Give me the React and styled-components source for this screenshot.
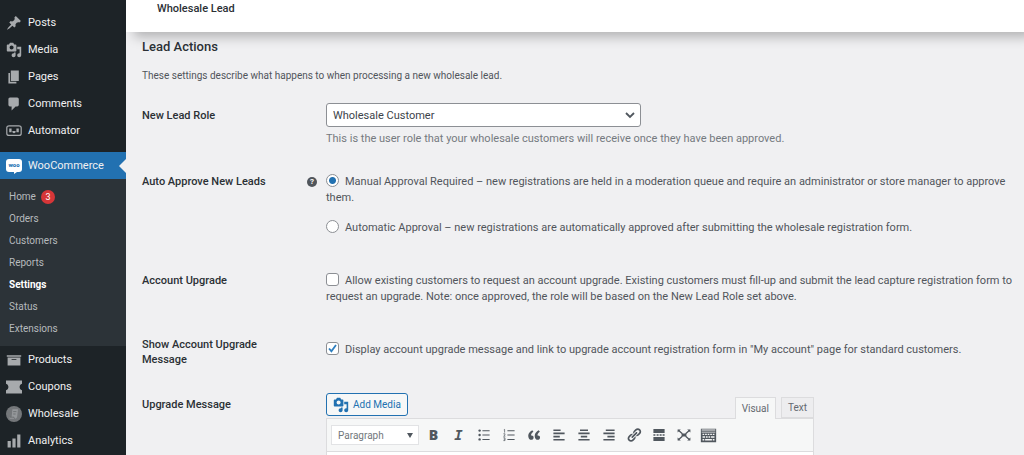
import { useState } from 'react';
import styled, { createGlobalStyle, css } from 'styled-components';

const GlobalStyle = createGlobalStyle`
  * {
    box-sizing: border-box;
  }

  body {
    margin: 0;
    background: #f0f0f2;
    color: #50555b;
    font-family: Roboto, 'Open Sans', sans-serif;
    font-size: 11px;
    line-height: 16px;
  }

  button,
  select,
  input {
    font: inherit;
    color: inherit;
  }
`;

const StyledLayout = styled.div`
  display: flex;
  height: 100vh;
  overflow: hidden;
`;

const StyledSidebar = styled.nav`
  flex: 0 0 126px;
  padding-top: 9px;
  background: #1d2327;
  overflow: hidden;

  ul {
    list-style: none;
    margin: 0;
    padding: 0;
  }
`;

const StyledMenuLink = styled.a`
  position: relative;
  display: flex;
  align-items: center;
  gap: 6px;
  height: 27px;
  padding-left: 6px;
  color: #f0f0f1;
  text-decoration: none;

  svg {
    flex: none;
    fill: #a7aaad;
  }

  ${({ $active }) =>
    $active &&
    css`
      margin-top: 8px;
      background: #2271b1;

      &::after {
        content: '';
        position: absolute;
        right: 0;
        border: 7px solid transparent;
        border-right-color: #f0f0f2;
        border-left-width: 0;
      }
    `}
`;

const StyledIconSlot = styled.span`
  display: flex;
  flex: 0 0 16px;
  justify-content: center;
`;

const StyledSubmenu = styled.ul`
  && {
    padding: 7px 0 6px;
    background: #2c3338;
  }
`;

const StyledSubLink = styled.a`
  display: flex;
  align-items: center;
  gap: 5px;
  height: 22px;
  padding-left: 9px;
  color: ${({ $current }) => ($current ? '#fff' : '#b6babd')};
  font-size: 10px;
  font-weight: ${({ $current }) => ($current ? 700 : 400)};
  text-decoration: none;
`;

const StyledBadge = styled.span`
  width: 14px;
  height: 14px;
  border-radius: 50%;
  background: #d63638;
  color: #fff;
  font-size: 9px;
  line-height: 14px;
  text-align: center;
`;

const StyledWoo = styled.span`
  position: relative;
  width: 16px;
  height: 13px;
  border-radius: 3px;
  background: #fff;
  color: #2271b1;
  font-size: 6px;
  font-weight: 800;
  line-height: 12px;
  text-align: center;

  &::after {
    content: '';
    position: absolute;
    top: 13px;
    left: 8px;
    border: solid transparent;
    border-width: 0 0 2px 3px;
    border-left-color: #fff;
  }
`;

const StyledMain = styled.main`
  flex: 1;
  min-width: 0;
`;

const StyledHeader = styled.header`
  height: 32px;
  padding: 1px 31px 0;
  background: #fff;
  box-shadow: 8px 5px 12px rgba(0, 0, 0, 0.26);
  color: #2b3035;
  font-weight: 500;
`;

const StyledForm = styled.form`
  padding: 5px 12px 0 16px;
`;

const StyledTitle = styled.h2`
  margin: 0 0 11px;
  color: #2b3035;
  font-size: 13px;
  font-weight: 500;
  line-height: 20px;
`;

const StyledIntro = styled.p`
  margin: 0 0 19px;
  font-size: 10px;
`;

const StyledRow = styled.div`
  display: grid;
  grid-template-columns: 154px 20px minmax(0, 1fr);
  gap: 0 5px;
  margin-bottom: 26px;
`;

const StyledLabel = styled.label`
  padding: ${({ $top }) => $top || 0}px 20px 0 0;
  color: #2b3035;
  font-weight: 500;
  line-height: 15px;
`;

const StyledHelp = styled.button`
  width: 10px;
  height: 10px;
  margin: 3px 0 0 6px;
  padding: 0;
  border: 0;
  border-radius: 50%;
  background: #50555b;
  color: #fff;
  font-size: 8px;
  font-weight: 700;
  line-height: 10px;
`;

const StyledField = styled.div`
  grid-column: 3;
  min-width: 0;
`;

const StyledSelectWrap = styled.div`
  position: relative;
  max-width: 315px;

  svg {
    position: absolute;
    top: 8px;
    right: 6px;
    pointer-events: none;
  }
`;

const StyledSelect = styled.select`
  display: block;
  width: 100%;
  height: 24px;
  padding: 1px 24px 0 6px;
  border: 1px solid #8c8f94;
  border-radius: 3px;
  background: #fff;
  color: #3c434a;
  appearance: none;
`;

const StyledDescription = styled.p`
  margin: 4px 0 1px;
  color: #757a80;
`;

const StyledOptions = styled.div`
  display: grid;
  gap: 14px;
  padding-bottom: 6px;
`;

const StyledCheckField = styled(StyledField)`
  padding: 5px 0 6px;
`;

const StyledInput = styled.input`
  width: 13px;
  height: 13px;
  margin: 0 6px 0 0;
  border: 1px solid #8c8f94;
  border-radius: ${({ type }) => (type === 'radio' ? '50%' : '3px')};
  background: #fff;
  appearance: none;
  vertical-align: -2px;

  &[type='radio']:checked {
    background: radial-gradient(circle, #2271b1 3px, #fff 4px);
  }

  &[type='checkbox']:checked {
    background: #fff
      url("data:image/svg+xml,%3Csvg xmlns='http://www.w3.org/2000/svg' viewBox='0 0 11 11'%3E%3Cpath d='M2 5.5l2.4 2.7L9 2' fill='none' stroke='%232f7fc0' stroke-width='1.8'/%3E%3C/svg%3E")
      center / 11px no-repeat;
  }
`;

const StyledEditor = styled.div`
  max-width: 488px;
`;

const StyledEditorTop = styled.div`
  display: flex;
  justify-content: space-between;
  align-items: flex-start;
  height: 25px;
`;

const StyledMediaButton = styled.button`
  display: flex;
  align-items: center;
  gap: 4px;
  height: 23px;
  padding: 0 6px;
  border: 1px solid #2271b1;
  border-radius: 3px;
  background: #f6f7f7;
  color: #2271b1;
  font-size: 10px;

  svg {
    fill: #2271b1;
  }
`;

const StyledTabs = styled.div`
  display: flex;
  gap: 5px;
  padding-top: 4px;
`;

const StyledTab = styled.button`
  position: relative;
  height: ${({ $active }) => ($active ? 22 : 21)}px;
  padding: 0 6px;
  border: 1px solid #dcdcde;
  border-bottom-width: ${({ $active }) => ($active ? 0 : 1)}px;
  background: ${({ $active }) => ($active ? '#f6f7f7' : '#ededef')};
  color: #646970;
  font-size: 10px;
`;

const StyledToolbar = styled.div`
  display: flex;
  align-items: center;
  height: 34px;
  padding: 0 4px;
  border: 1px solid #dcdcde;
  background: #f6f7f7;
`;

const StyledFormat = styled(StyledSelectWrap)`
  width: 88px;
  margin-right: 2px;

  select {
    height: 20px;
    border-color: #e2e3e5;
    border-radius: 0;
    color: #72777c;
    font-size: 10px;
  }
`;

const StyledTool = styled.button`
  display: flex;
  align-items: center;
  justify-content: center;
  flex: 0 0 25px;
  height: 24px;
  padding: 0;
  border: 0;
  background: none;
  color: #50575e;

  svg {
    fill: currentColor;
  }
`;

const StyledBold = styled.b`
  font-family: 'Open Sans', sans-serif;
  font-size: 14px;
  font-weight: 800;
`;

const StyledItalic = styled.i`
  font-family: 'DejaVu Sans Mono', monospace;
  font-size: 14px;
  font-weight: 700;
`;

const StyledContent = styled.div`
  height: 120px;
  border: 1px solid #dcdcde;
  border-top: 0;
  background: #fff;
`;

const Icon = ({ size = 16, children }) => (
  <svg width={size} height={size} viewBox="0 0 20 20" aria-hidden="true">
    {children}
  </svg>
);

const MediaIcon = () => (
  <Icon>
    <path d="M13 11V4c0-.55-.45-1-1-1h-1.67L9 1H5L3.67 3H2c-.55 0-1 .45-1 1v7c0 .55.45 1 1 1h10c.55 0 1-.45 1-1zM7 4.5c1.38 0 2.5 1.12 2.5 2.5S8.38 9.5 7 9.5 4.5 8.38 4.5 7 5.62 4.5 7 4.5zM14 6h5v10.5c0 1.38-1.12 2.5-2.5 2.5S14 17.88 14 16.5s1.12-2.5 2.5-2.5c.17 0 .34.02.5.05V9h-3V6zm-4 8.05V13h2v3.5c0 1.38-1.12 2.5-2.5 2.5S7 17.88 7 16.5 8.12 14 9.5 14c.17 0 .34.02.5.05z" />
  </Icon>
);

const topItems = [
  {
    name: 'Posts',
    icon: (
      <Icon>
        <path d="M10.44 3.02l1.82-1.82 6.36 6.35-1.83 1.82c-1.05-.68-2.48-.57-3.41.36l-.75.75c-.92.93-1.04 2.35-.35 3.41l-1.83 1.82-2.41-2.41-2.8 2.79c-.42.42-3.38 2.71-3.8 2.29s1.86-3.39 2.28-3.81l2.79-2.79L4.1 9.36l1.83-1.82c1.05.69 2.48.57 3.4-.36l.75-.75c.93-.92 1.05-2.35.36-3.41z" />
      </Icon>
    ),
  },
  { name: 'Media', icon: <MediaIcon /> },
  {
    name: 'Pages',
    icon: (
      <Icon>
        <path d="M6 15V2h10v13H6zm-1 1h8v2H3V5h2v11z" />
      </Icon>
    ),
  },
  {
    name: 'Comments',
    icon: (
      <Icon>
        <path d="M5 2h9c1.1 0 2 .9 2 2v7c0 1.1-.9 2-2 2h-2l-5 5v-5H5c-1.1 0-2-.9-2-2V4c0-1.1.9-2 2-2z" />
      </Icon>
    ),
  },
  {
    name: 'Automator',
    icon: (
      <Icon>
        <path
          d="M4 3.500h12c1.700 0 3 1 3 2.500v7c0 1.500-1.300 2.500-3 2.500H4c-1.700 0-3-1-3-2.500V6c0-1.500 1.300-2.500 3-2.500z"
          fill="none"
          stroke="#a7aaad"
          strokeWidth="1.500"
        />
        <path d="M4 7h3v4.500H4zM13 7h3v4.500h-3zM8 10h4v1.500c-1 1.600-3 1.600-4 0z" />
      </Icon>
    ),
  },
];

const bottomItems = [
  {
    name: 'Products',
    icon: (
      <Icon>
        <path d="M19 4v2H1V4h18zM2 7h16v10H2V7zm11 3V9H7v1h6z" />
      </Icon>
    ),
  },
  {
    name: 'Coupons',
    icon: (
      <Icon>
        <path d="M0 2h20v4c-2 .8-3 2.200-3 4s1 3.200 3 4v4H0v-4c2-.8 3-2.200 3-4s-1-3.200-3-4z" />
      </Icon>
    ),
  },
  {
    name: 'Wholesale',
    icon: (
      <Icon>
        <circle cx="10" cy="10" r="10" fill="#74777a" />
        <path
          d="M8 4h7l-1 9c-.3 2-1.500 3-3.500 3H5c-1 0-1-2 0-2h2z"
          fill="#94979a"
        />
        <path
          d="M9 7h4M9 10h3M5 14h5c0 1 .5 2 1.500 2"
          fill="none"
          stroke="#66696c"
        />
      </Icon>
    ),
  },
  {
    name: 'Analytics',
    icon: (
      <Icon>
        <path d="M18 18V2h-4v16h4zm-6 0V7H8v11h4zm-6 0v-8H2v8h4z" />
      </Icon>
    ),
  },
];

const subItems = [
  { name: 'Home', count: 3 },
  { name: 'Orders' },
  { name: 'Customers' },
  { name: 'Reports' },
  { name: 'Settings', current: true },
  { name: 'Status' },
  { name: 'Extensions' },
];

const tools = [
  { name: 'Bold', icon: <StyledBold>B</StyledBold> },
  { name: 'Italic', icon: <StyledItalic>I</StyledItalic> },
  {
    name: 'Bulleted list',
    icon: (
      <Icon>
        <circle cx="4.500" cy="4.500" r="1.500" />
        <circle cx="4.500" cy="10" r="1.500" />
        <circle cx="4.500" cy="15.500" r="1.500" />
        <path d="M8 4h9v1.200H8zM8 9.400h9v1.200H8zM8 15h9v1.200H8z" />
      </Icon>
    ),
  },
  {
    name: 'Numbered list',
    icon: (
      <Icon>
        <path d="M8 4h9v1.200H8zM8 9.400h9v1.200H8zM8 15h9v1.200H8z" />
        <path
          d="M3.500 3.500l1-.5v4M3 8.500h2v1.300L3.300 11.500H5.500M3 13.500h2v3.500H3M3.500 15.200H5"
          fill="none"
          stroke="currentColor"
          strokeWidth=".9"
        />
      </Icon>
    ),
  },
  {
    name: 'Blockquote',
    icon: (
      <Icon>
        <path d="M9.490 13.220c0-.74-.2-1.380-.61-1.900-.62-.78-1.830-.88-2.530-.72-.29-1.650 1.110-3.750 2.920-4.650L7.880 4c-2.730 1.300-5.420 4.280-4.960 8.050C3.210 14.430 4.590 16 6.540 16c.85 0 1.560-.25 2.120-.75s.83-1.180.83-2.030zm8.050 0c0-.74-.2-1.380-.61-1.900-.63-.78-1.830-.88-2.530-.72-.29-1.650 1.110-3.750 2.920-4.650L15.930 4c-2.730 1.300-5.410 4.280-4.950 8.050.29 2.380 1.660 3.950 3.610 3.950.85 0 1.560-.25 2.120-.75s.83-1.180.83-2.030z" />
      </Icon>
    ),
  },
  {
    name: 'Align left',
    icon: (
      <Icon>
        <path d="M3 3h9v2H3zM3 7h14v2H3zM3 11h8v2H3zM3 15h14v2H3z" />
      </Icon>
    ),
  },
  {
    name: 'Align center',
    icon: (
      <Icon>
        <path d="M5 3h10v2H5zM3 7h14v2H3zM6 11h8v2H6zM3 15h14v2H3z" />
      </Icon>
    ),
  },
  {
    name: 'Align right',
    icon: (
      <Icon>
        <path d="M6 3h11v2H6zM3 7h14v2H3zM8 11h9v2H8zM3 15h14v2H3z" />
      </Icon>
    ),
  },
  {
    name: 'Insert link',
    icon: (
      <Icon>
        <path d="M17.740 2.760c1.680 1.690 1.680 4.410 0 6.100l-1.530 1.520c-1.120 1.120-2.700 1.470-4.140 1.090l2.620-2.610.76-.77.76-.76c.84-.84.84-2.200 0-3.040-.84-.85-2.200-.85-3.040 0l-.77.76-3.380 3.380c-.37-1.440-.02-3.020 1.100-4.140l1.520-1.530c1.690-1.680 4.420-1.680 6.100 0zM8.590 13.430l5.340-5.340c.42-.42.42-1.100 0-1.520-.44-.43-1.130-.39-1.530 0l-5.330 5.340c-.42.42-.42 1.100 0 1.520.44.43 1.130.39 1.520 0zm-.76 2.290l4.140-4.150c.38 1.440.03 3.020-1.090 4.140l-1.520 1.530c-1.690 1.680-4.410 1.680-6.100 0-1.680-1.680-1.680-4.420 0-6.100l1.530-1.520c1.120-1.120 2.700-1.470 4.140-1.100l-4.140 4.150c-.85.84-.85 2.200 0 3.050.84.84 2.200.84 3.040 0z" />
      </Icon>
    ),
  },
  {
    name: 'Read more',
    icon: (
      <Icon>
        <path d="M3 2.500h14v5H3zM3 12.500h14v5H3zM3 9h2.500v2H3zM7 9h2.500v2H7zM10.800 9h2.500v2h-2.500zM14.500 9H17v2h-2.500z" />
      </Icon>
    ),
  },
  {
    name: 'Distraction-free mode',
    icon: (
      <Icon>
        <path d="M7 8h6v4H7zM2 3h4L2 7zM18 3h-4l4 4zM2 17h4l-4-4zM18 17h-4l4-4z" />
        <path
          d="M3 4l5 4.500M17 4l-5 4.500M3 16l5-4.500M17 16l-5-4.500"
          stroke="currentColor"
          strokeWidth="1.600"
        />
      </Icon>
    ),
  },
  {
    name: 'Toolbar toggle',
    icon: (
      <Icon size={17}>
        <path
          fillRule="evenodd"
          d="M1 2h18v16H1zM2 3v1.200h16V3zM2 5.500v1h16v-1zM3 8v1.500h2V8zM6 8v1.500h2V8zM9 8v1.500h2V8zM12 8v1.500h2V8zM15 8v1.500h2V8zM3 11v1.500h3V11zM7 11v1.500h2V11zM10 11v1.500h2V11zM13 11v1.500h4V11zM3 14v2h2v-2zM6 14v2h8v-2zM15 14v2h2v-2z"
        />
      </Icon>
    ),
  },
];

const MenuItems = ({ items }) =>
  items.map(({ name, icon }) => (
    <li key={name}>
      <StyledMenuLink href="#">
        <StyledIconSlot>{icon}</StyledIconSlot>
        {name}
      </StyledMenuLink>
    </li>
  ));

const Sidebar = () => (
  <StyledSidebar>
    <ul>
      <MenuItems items={topItems} />
      <li>
        <StyledMenuLink href="#" $active>
          <StyledWoo aria-hidden="true">woo</StyledWoo>
          WooCommerce
        </StyledMenuLink>
        <StyledSubmenu>
          {subItems.map(({ name, count, current }) => (
            <li key={name}>
              <StyledSubLink href="#" $current={current}>
                {name}
                {count && <StyledBadge>{count}</StyledBadge>}
              </StyledSubLink>
            </li>
          ))}
        </StyledSubmenu>
      </li>
      <MenuItems items={bottomItems} />
    </ul>
  </StyledSidebar>
);

const Editor = () => {
  const [tab, setTab] = useState('Visual');

  return (
    <StyledEditor>
      <StyledEditorTop>
        <StyledMediaButton type="button">
          <MediaIcon />
          Add Media
        </StyledMediaButton>
        <StyledTabs>
          {['Visual', 'Text'].map((name) => (
            <StyledTab
              key={name}
              type="button"
              $active={tab === name}
              onClick={() => setTab(name)}
            >
              {name}
            </StyledTab>
          ))}
        </StyledTabs>
      </StyledEditorTop>
      <StyledToolbar>
        <StyledFormat>
          <StyledSelect aria-label="Format">
            <option>Paragraph</option>
          </StyledSelect>
          <svg width="6" height="5" viewBox="0 0 6 5">
            <path d="M0 0h6L3 5z" fill="#50575e" />
          </svg>
        </StyledFormat>
        {tools.map(({ name, icon }) => (
          <StyledTool key={name} type="button" aria-label={name}>
            {icon}
          </StyledTool>
        ))}
      </StyledToolbar>
      <StyledContent id="message" contentEditable suppressContentEditableWarning />
    </StyledEditor>
  );
};

const App = () => {
  const [approval, setApproval] = useState('manual');

  return (
    <>
      <GlobalStyle />
      <StyledLayout>
        <Sidebar />
        <StyledMain>
          <StyledHeader>Wholesale Lead</StyledHeader>
          <StyledForm>
            <StyledTitle>Lead Actions</StyledTitle>
            <StyledIntro>
              These settings describe what happens to when processing a new
              wholesale lead.
            </StyledIntro>

            <StyledRow>
              <StyledLabel htmlFor="role" $top={5}>
                New Lead Role
              </StyledLabel>
              <StyledField>
                <StyledSelectWrap>
                  <StyledSelect id="role">
                    <option>Wholesale Customer</option>
                  </StyledSelect>
                  <svg width="10" height="8" viewBox="0 0 10 8">
                    <path
                      d="M1 2l4 4 4-4"
                      fill="none"
                      stroke="#50575e"
                      strokeWidth="1.800"
                    />
                  </svg>
                </StyledSelectWrap>
                <StyledDescription>
                  This is the user role that your wholesale customers will
                  receive once they have been approved.
                </StyledDescription>
              </StyledField>
            </StyledRow>

            <StyledRow>
              <StyledLabel as="span" id="approve">
                Auto Approve New Leads
              </StyledLabel>
              <StyledHelp type="button">?</StyledHelp>
              <StyledField role="radiogroup" aria-labelledby="approve">
                <StyledOptions>
                  <label>
                    <StyledInput
                      type="radio"
                      name="approval"
                      checked={approval === 'manual'}
                      onChange={() => setApproval('manual')}
                    />
                    Manual Approval Required – new registrations are held in a
                    moderation queue and require an administrator or store
                    manager to approve them.
                  </label>
                  <label>
                    <StyledInput
                      type="radio"
                      name="approval"
                      checked={approval === 'auto'}
                      onChange={() => setApproval('auto')}
                    />
                    Automatic Approval – new registrations are automatically
                    approved after submitting the wholesale registration form.
                  </label>
                </StyledOptions>
              </StyledField>
            </StyledRow>

            <StyledRow>
              <StyledLabel htmlFor="upgrade" $top={5}>
                Account Upgrade
              </StyledLabel>
              <StyledCheckField>
                <label>
                  <StyledInput type="checkbox" id="upgrade" />
                  Allow existing customers to request an account upgrade.
                  Existing customers must fill-up and submit the lead capture
                  registration form to request an upgrade. Note: once approved,
                  the role will be based on the New Lead Role set above.
                </label>
              </StyledCheckField>
            </StyledRow>

            <StyledRow>
              <StyledLabel htmlFor="show">
                Show Account Upgrade Message
              </StyledLabel>
              <StyledCheckField>
                <label>
                  <StyledInput type="checkbox" id="show" defaultChecked />
                  Display account upgrade message and link to upgrade account
                  registration form in "My account" page for standard customers.
                </label>
              </StyledCheckField>
            </StyledRow>

            <StyledRow>
              <StyledLabel as="span" $top={4}>
                Upgrade Message
              </StyledLabel>
              <StyledField>
                <Editor />
              </StyledField>
            </StyledRow>
          </StyledForm>
        </StyledMain>
      </StyledLayout>
    </>
  );
};

export default App;
